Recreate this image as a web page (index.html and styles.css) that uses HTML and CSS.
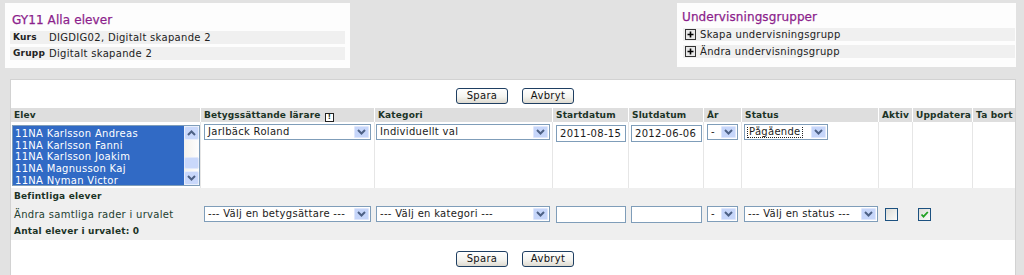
FILE: index.html
```html
<!DOCTYPE html>
<html lang="sv">
<head>
<meta charset="utf-8">
<title>GY11 Alla elever</title>
<link rel="stylesheet" href="styles.css">
</head>
<body>
<div class="top">
  <section class="box info">
    <h1 class="title">GY11 Alla elever</h1>
    <div class="info-row"><span class="lbl">Kurs</span><span>DIGDIG02, Digitalt skapande 2</span></div>
    <div class="info-row"><span class="lbl">Grupp</span><span>Digitalt skapande 2</span></div>
  </section>
  <section class="box groups">
    <h2 class="title">Undervisningsgrupper</h2>
    <div class="grow"><svg class="plus" width="11" height="11" viewBox="0 0 11 11"><rect x="0.5" y="0.5" width="10" height="10" fill="#e9e9e9" stroke="#333"/><path d="M5.5 2.5v6M2.5 5.5h6" stroke="#000" stroke-width="1.6"/></svg><span>Skapa undervisningsgrupp</span></div>
    <div class="grow"><svg class="plus" width="11" height="11" viewBox="0 0 11 11"><rect x="0.5" y="0.5" width="10" height="10" fill="#e9e9e9" stroke="#333"/><path d="M5.5 2.5v6M2.5 5.5h6" stroke="#000" stroke-width="1.6"/></svg><span>Ändra undervisningsgrupp</span></div>
  </section>
</div>

<main class="panel">
  <div class="btnbar"><button class="btn">Spara</button><button class="btn">Avbryt</button></div>

  <div class="row head">
    <div class="c">Elev</div>
    <div class="c">Betygssättande lärare <span class="ico">!</span></div>
    <div class="c">Kategori</div>
    <div class="c">Startdatum</div>
    <div class="c">Slutdatum</div>
    <div class="c">År</div>
    <div class="c">Status</div>
    <div class="c">Aktiv</div>
    <div class="c">Uppdatera</div>
    <div class="c">Ta bort</div>
  </div>

  <div class="row data">
    <div class="c c-list">
      <div class="listbox">
        <div class="items">
          <div>11NA Karlsson Andreas</div>
          <div>11NA Karlsson Fanni</div>
          <div>11NA Karlsson Joakim</div>
          <div>11NA Magnusson Kaj</div>
          <div>11NA Nyman Victor</div>
        </div>
        <div class="sb">
          <div class="sb-btn"><svg width="9" height="6" viewBox="0 0 9 6"><path d="M1 5l3.5-3.5L8 5" fill="none" stroke="#4d6185" stroke-width="2"/></svg></div>
          <div class="sb-track"><div class="sb-thumb"></div></div>
          <div class="sb-btn"><svg width="9" height="6" viewBox="0 0 9 6"><path d="M1 1l3.5 3.5L8 1" fill="none" stroke="#4d6185" stroke-width="2"/></svg></div>
        </div>
      </div>
    </div>
    <div class="c c-betyg"><div class="sel w-betyg"><span class="val">Jarlbäck Roland</span><span class="arr"><svg width="9" height="6" viewBox="0 0 9 6"><path d="M1 1l3.5 3.5L8 1" fill="none" stroke="#4d6185" stroke-width="2"/></svg></span></div></div>
    <div class="c c-kat"><div class="sel w-kat"><span class="val">Individuellt val</span><span class="arr"><svg width="9" height="6" viewBox="0 0 9 6"><path d="M1 1l3.5 3.5L8 1" fill="none" stroke="#4d6185" stroke-width="2"/></svg></span></div></div>
    <div class="c c-start"><div class="inp w-start">2011-08-15</div></div>
    <div class="c c-slut"><div class="inp w-slut">2012-06-06</div></div>
    <div class="c c-ar"><div class="sel w-ar"><span class="val">-</span><span class="arr"><svg width="9" height="6" viewBox="0 0 9 6"><path d="M1 1l3.5 3.5L8 1" fill="none" stroke="#4d6185" stroke-width="2"/></svg></span></div></div>
    <div class="c c-status"><div class="sel w-status"><span class="val"><span class="focus">Pågående</span></span><span class="arr"><svg width="9" height="6" viewBox="0 0 9 6"><path d="M1 1l3.5 3.5L8 1" fill="none" stroke="#4d6185" stroke-width="2"/></svg></span></div></div>
    <div class="c"></div>
    <div class="c"></div>
    <div class="c"></div>
  </div>

  <div class="existing">
    <div class="ex-title">Befintliga elever</div>
    <div class="row bulk">
      <div class="c">Ändra samtliga rader i urvalet</div>
      <div class="c c-betyg"><div class="sel w-betyg"><span class="val">--- Välj en betygsättare ---</span><span class="arr"><svg width="9" height="6" viewBox="0 0 9 6"><path d="M1 1l3.5 3.5L8 1" fill="none" stroke="#4d6185" stroke-width="2"/></svg></span></div></div>
      <div class="c c-kat"><div class="sel w-kat"><span class="val">--- Välj en kategori ---</span><span class="arr"><svg width="9" height="6" viewBox="0 0 9 6"><path d="M1 1l3.5 3.5L8 1" fill="none" stroke="#4d6185" stroke-width="2"/></svg></span></div></div>
      <div class="c c-start"><div class="inp w-start"></div></div>
      <div class="c c-slut"><div class="inp w-slut"></div></div>
      <div class="c c-ar"><div class="sel w-ar"><span class="val">-</span><span class="arr"><svg width="9" height="6" viewBox="0 0 9 6"><path d="M1 1l3.5 3.5L8 1" fill="none" stroke="#4d6185" stroke-width="2"/></svg></span></div></div>
      <div class="c c-status"><div class="sel w-status-wide"><span class="val">--- Välj en status ---</span><span class="arr"><svg width="9" height="6" viewBox="0 0 9 6"><path d="M1 1l3.5 3.5L8 1" fill="none" stroke="#4d6185" stroke-width="2"/></svg></span></div></div>
      <div class="c c-aktiv"><span class="chk"></span></div>
      <div class="c c-upd"><span class="chk"><svg width="11" height="11" viewBox="0 0 11 11"><path d="M2.5 5.5l2 2.2L8.8 3" fill="none" stroke="#21a121" stroke-width="1.8"/></svg></span></div>
      <div class="c"></div>
    </div>
    <div class="ex-count">Antal elever i urvalet: 0</div>
  </div>

  <div class="btnbar bottom"><button class="btn">Spara</button><button class="btn">Avbryt</button></div>
</main>
</body>
</html>
```

FILE: styles.css
```css
* { box-sizing: border-box; }
html, body { margin: 0; padding: 0; }
body {
  width: 1024px;
  height: 275px;
  overflow: hidden;
  background: #e2e2e2;
  font-family: "DejaVu Sans", Verdana, sans-serif;
  font-size: 10px;
  letter-spacing: 0.3px;
  color: #1f1f1f;
}

/* top boxes */
.top {
  display: flex;
  justify-content: space-between;
  padding: 3px 8px 0 5px;
  height: 79px;
}
.box { background: #fdfdfd; }
.info { width: 345px; height: 65px; padding: 8px 5px 0 5px; }
.groups { width: 339px; height: 64px; padding: 5px 1px 0 6px; }
.title {
  margin: 0 0 2px 2px;
  font-size: 12px;
  font-weight: normal;
  line-height: 18px;
  letter-spacing: 0.1px;
  color: #8c1f8c;
  -webkit-text-stroke: 0.25px #8c1f8c;
}
.groups .title { margin-left: -1px; }
.info-row {
  display: flex;
  height: 13px;
  line-height: 13px;
  background: #f0f0f0;
  padding-left: 3px;
  margin-bottom: 3px;
  color: #222;
}
.lbl { width: 36px; font-weight: bold; font-size: 9px; letter-spacing: 0.2px; }
.grow {
  display: flex;
  align-items: center;
  gap: 4px;
  height: 13px;
  background: #f0f0f0;
  margin-bottom: 4px;
  padding-left: 2px;
  color: #222;
}
.plus { display: block; }

/* main panel */
.panel {
  margin: 0 8px 0 10px;
  height: 200px;
  background: #fff;
  border: 1px solid #d2d2d2;
  color: #23402f;
}
.btnbar {
  display: flex;
  justify-content: center;
  gap: 14px;
  padding: 8px 0 4px 4px;
}
.btnbar.bottom { padding-top: 11px; }
.btn {
  width: 52px;
  height: 16px;
  padding: 0;
  border: 1px solid #1f3f62;
  border-radius: 3px;
  background: linear-gradient(#ffffff, #f4f4f0 55%, #dedad0);
  font-family: inherit;
  font-size: 10px;
  letter-spacing: 0.3px;
  color: #111;
  line-height: 14px;
}

.row {
  display: grid;
  grid-template-columns: 190px 174px 178px 76px 75px 38px 137px 34px 60px 42px;
}
.head { height: 14px; background: #dedede; }
.head .c {
  border-right: 1px solid #fff;
  padding-left: 3px;
  font-weight: bold;
  font-size: 9px;
  letter-spacing: 0.15px;
  line-height: 14px;
  color: #1b3326;
  white-space: nowrap;
}
.head .c:last-child { border-right: 0; }
.ico {
  display: inline-block;
  width: 9px;
  height: 9px;
  border: 1px solid #222;
  background: #fff;
  font-size: 7px;
  line-height: 7px;
  text-align: center;
  letter-spacing: 0;
  vertical-align: -1px;
  margin-left: 1px;
}

.data { height: 66px; }
.data .c { border-right: 1px solid #e6e6e6; padding-top: 2px; }
.data .c:last-child { border-right: 0; }

.c-list { padding-left: 1px; }
.data .c-list { padding-top: 3px; }
.c-betyg { padding-left: 3px; }
.c-kat { padding-left: 1px; }
.c-start { padding-left: 3px; }
.c-slut { padding-left: 2px; }
.c-ar { padding-left: 3px; }
.c-status { padding-left: 2px; }
.c-aktiv { padding-left: 6px; }
.c-upd { padding-left: 5px; }
.data .c-start, .data .c-slut { padding-top: 3px; }

/* listbox */
.listbox {
  display: flex;
  width: 188px;
  height: 61px;
  border: 1px solid #7f9db9;
  background: #fff;
}
.items {
  flex: 1;
  background: #316ac5;
  color: #fff;
  padding: 2px 0 0 2px;
  line-height: 11.7px;
  white-space: nowrap;
  overflow: hidden;
}
.sb {
  width: 15px;
  display: flex;
  flex-direction: column;
  background: linear-gradient(90deg, #f3f1ec, #fefefe);
}
.sb-btn {
  height: 14px;
  display: flex;
  align-items: center;
  justify-content: center;
  background: #c9d8fb;
  border: 1px solid #e8eefc;
  border-radius: 2px;
}
.sb-btn svg { display: block; }
.sb-track { flex: 1; position: relative; }
.sb-thumb {
  position: absolute;
  left: 0;
  right: 0;
  top: 17px;
  height: 12px;
  background: #c9d8fb;
  border: 1px solid #e2e9fb;
  border-radius: 2px;
}

/* select & input */
.sel {
  display: flex;
  height: 16px;
  border: 1px solid #7f9db9;
  background: #fff;
  padding: 1px;
  color: #1a1a1a;
}
.val {
  flex: 1;
  padding-left: 2px;
  line-height: 12px;
  white-space: nowrap;
  overflow: hidden;
}
.focus { outline: 1px dotted #222; outline-offset: 0; padding: 0 1px; }
.arr {
  width: 15px;
  display: flex;
  align-items: center;
  justify-content: center;
  background: #c6d6fa;
  border: 1px solid #dfe7fc;
  border-radius: 1px;
}
.arr svg { display: block; }
.w-betyg { width: 167px; }
.w-kat { width: 174px; }
.w-ar { width: 31px; }
.w-status { width: 84px; }
.w-status-wide { width: 134px; }
.inp {
  height: 17px;
  border: 1px solid #7f9db9;
  background: #fff;
  padding-left: 3px;
  line-height: 15px;
  color: #1a1a1a;
}
.w-start { width: 70px; }
.w-slut { width: 71px; }

/* existing section */
.existing {
  height: 52px;
  background: #efefef;
}
.ex-title, .ex-count {
  height: 16px;
  line-height: 16px;
  padding-left: 3px;
  font-weight: bold;
  font-size: 9px;
  letter-spacing: 0.2px;
  color: #1b3326;
}
.ex-count { height: 16px; line-height: 14px; }
.bulk { height: 20px; align-items: center; }
.bulk .c:first-child { padding-left: 3px; white-space: nowrap; color: #23402f; }
.bulk .c-start, .bulk .c-slut { padding-top: 0; }
.chk {
  display: block;
  width: 13px;
  height: 13px;
  border: 1px solid #1c5180;
  background: linear-gradient(135deg, #dcdcd7, #fbfbf9);
}
.chk svg { display: block; margin: 0; }
```
